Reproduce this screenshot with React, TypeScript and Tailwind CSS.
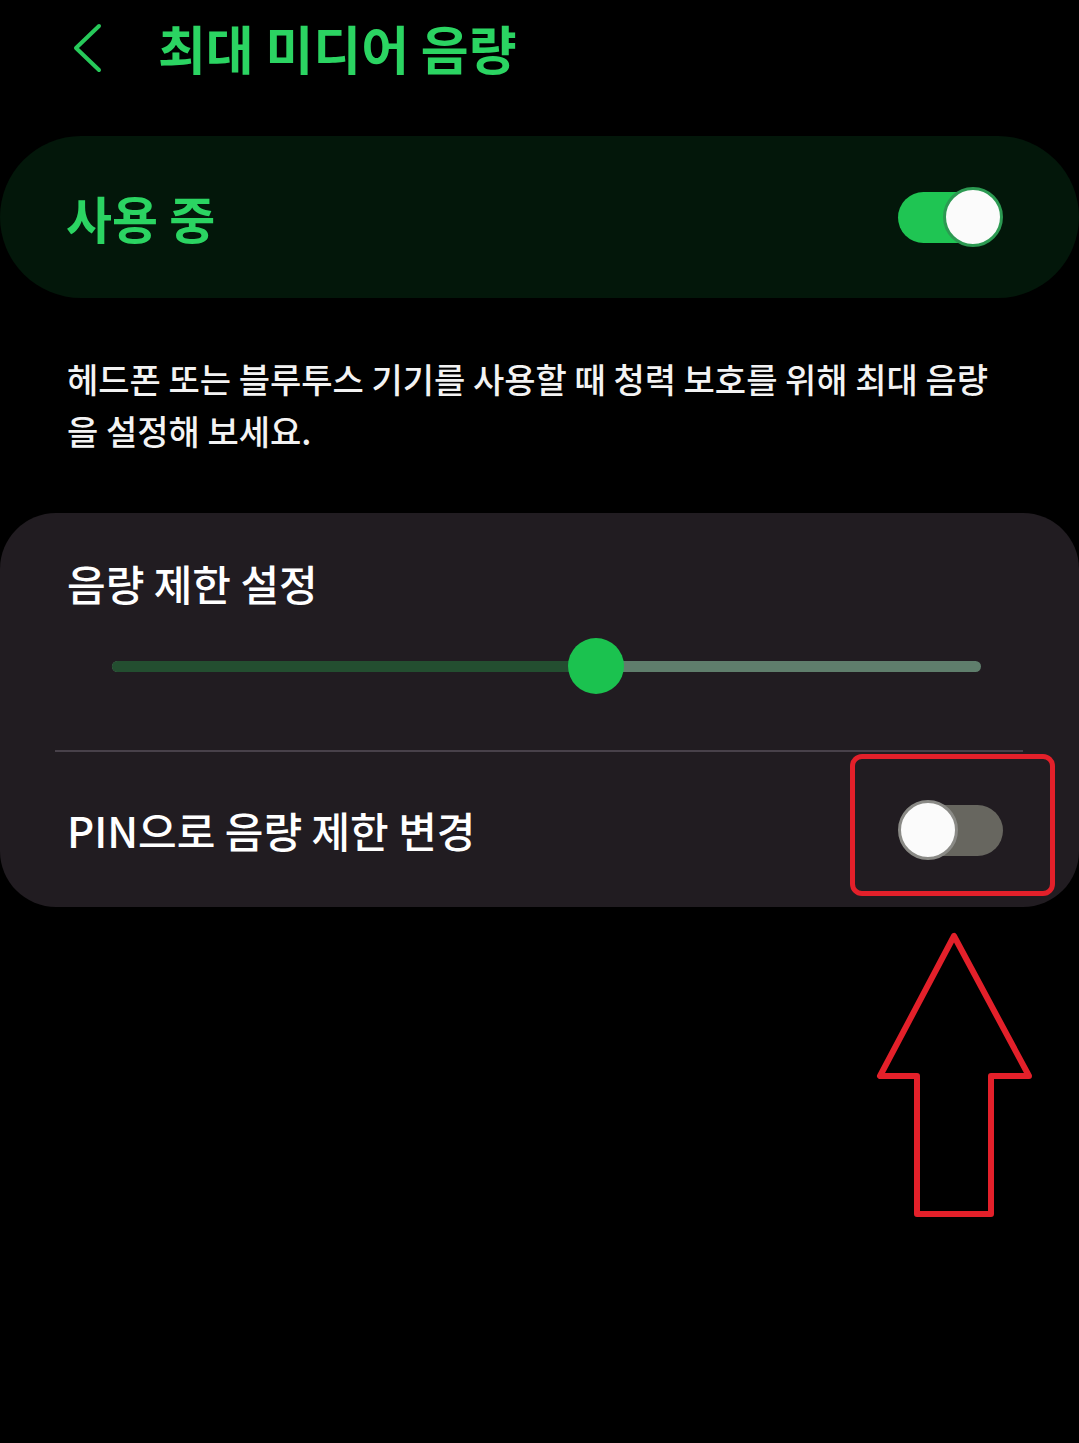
import React from 'react';

const Toggle: React.FC<{ on: boolean }> = ({ on }) => (
  <div className="relative w-[105px] h-[60px] shrink-0">
    <div
      className={`absolute top-[5px] h-[51px] rounded-full ${
        on ? 'left-0 w-[100px] bg-[#1fc553]' : 'right-0 w-[100px] bg-[#67665f]'
      }`}
    />
    <div
      className={`absolute top-0 w-[60px] h-[60px] rounded-full bg-[#fbfbfb] border-[3px] ${
        on ? 'right-0 border-[#2c9a52]' : 'left-0 border-[#8a8a86]'
      }`}
    />
  </div>
);

export default function App() {
  const level = 55.7;

  return (
    <div className="relative min-h-[1443px] bg-black font-['Noto_Sans_CJK_KR','Noto_Sans',sans-serif] overflow-hidden">
      {/* header */}
      <div className="flex items-center h-[96px] pl-[70px]">
        <svg width="34" height="50" viewBox="0 0 34 50" fill="none">
          <path d="M29 3 L6 25 L29 47" stroke="#27c95a" strokeWidth="4" strokeLinecap="round" strokeLinejoin="round" />
        </svg>
        <h1 className="ml-[54px] text-[52px] leading-none font-bold text-[#2bd462]">최대 미디어 음량</h1>
      </div>

      {/* master switch */}
      <div className="mt-[40px] h-[162px] rounded-full bg-[#03170a] flex items-center justify-between pl-[66px] pr-[76px]">
        <span className="text-[50px] font-bold text-[#2bd462] leading-none">사용 중</span>
        <Toggle on />
      </div>

      <p className="mt-[55px] pl-[67px] w-[1012px] text-[34px] leading-[52px] font-medium text-[#f3f3f3]">
        헤드폰 또는 블루투스 기기를 사용할 때 청력 보호를 위해 최대 음량을 설정해 보세요.
      </p>

      {/* limit card */}
      <div className="mt-[56px] rounded-[56px] bg-[#211c21] pt-[45px]">
        <div className="pl-[67px] text-[42px] leading-[50px] font-medium text-white">음량 제한 설정</div>
        <div className="h-[116px] flex items-center ml-[112px] mr-[98px]">
          <div className="relative w-full h-[11px] rounded-full bg-[#5f7e6c]">
            <div className="absolute left-0 top-0 h-full rounded-full bg-[#234e30]" style={{ width: `${level}%` }} />
            <div
              className="absolute top-1/2 w-[56px] h-[56px] -ml-[28px] -mt-[28px] rounded-full bg-[#1bc24f]"
              style={{ left: `${level}%` }}
            />
          </div>
        </div>
        <div className="mt-[26px] ml-[55px] mr-[56px] h-[2px] bg-[#48414a]" />
        <div className="h-[155px] flex items-center justify-between pl-[67px] pr-[76px]">
          <span className="text-[42px] font-medium text-white leading-none">PIN으로 음량 제한 변경</span>
          <Toggle on={false} />
        </div>
      </div>

      {/* callout */}
      <div className="absolute left-[850px] top-[754px] w-[205px] h-[142px] rounded-[12px] border-[5px] border-[#e3202a]" />
      <svg className="absolute left-[870px] top-[926px]" width="170" height="296" viewBox="870 926 170 296" fill="none">
        <path
          d="M954 936 L880 1076 L917 1076 L917 1214 L991 1214 L991 1076 L1029 1076 Z"
          stroke="#e3202a"
          strokeWidth="6"
          strokeLinejoin="round"
        />
      </svg>
    </div>
  );
}
